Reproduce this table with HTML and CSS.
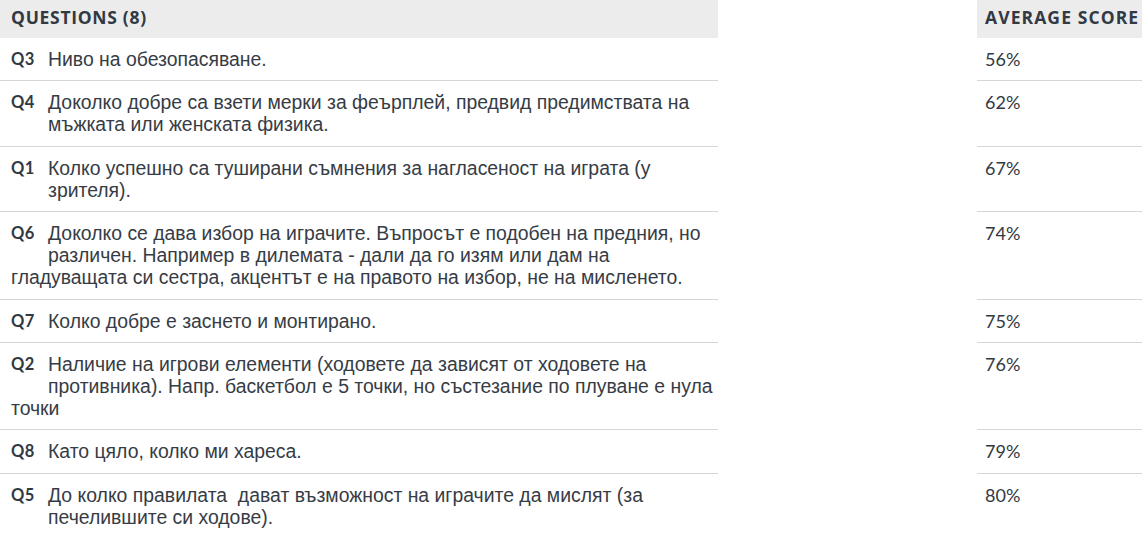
FILE: index.html
```html
<!DOCTYPE html>
<html lang="bg">
<head>
<meta charset="utf-8">
<title>Questions</title>
<link rel="stylesheet" href="styles.css">
</head>
<body>
<div class="board">
  <div class="head">
    <div class="head-q">QUESTIONS (8)</div>
    <div class="head-s">AVERAGE SCORE</div>
  </div>

  <div class="row">
    <div class="score">56%</div>
    <div class="q"><span class="qid">Q3</span>Ниво на обезопасяване.</div>
  </div>
  <div class="row">
    <div class="score">62%</div>
    <div class="q"><span class="qid">Q4</span>Доколко добре са взети мерки за феърплей, предвид предимствата на мъжката или женската физика.</div>
  </div>
  <div class="row">
    <div class="score">67%</div>
    <div class="q"><span class="qid">Q1</span>Колко успешно са туширани съмнения за нагласеност на играта (у зрителя).</div>
  </div>
  <div class="row">
    <div class="score">74%</div>
    <div class="q"><span class="qid">Q6</span>Доколко се дава избор на играчите. Въпросът е подобен на предния, но различен. Например в дилемата - дали да го изям или дам на гладуващата си сестра, акцентът е на правото на избор, не на мисленето.</div>
  </div>
  <div class="row">
    <div class="score">75%</div>
    <div class="q"><span class="qid">Q7</span>Колко добре е заснето и монтирано.</div>
  </div>
  <div class="row">
    <div class="score">76%</div>
    <div class="q"><span class="qid">Q2</span>Наличие на игрови елементи (ходовете да зависят от ходовете на противника). Напр. баскетбол е 5 точки, но състезание по плуване е нула точки</div>
  </div>
  <div class="row">
    <div class="score">79%</div>
    <div class="q"><span class="qid">Q8</span>Като цяло, колко ми хареса.</div>
  </div>
  <div class="row">
    <div class="score">80%</div>
    <div class="q"><span class="qid">Q5</span>До колко правилата&nbsp; дават възможност на играчите да мислят (за печелившите си ходове).</div>
  </div>
</div>
</body>
</html>
```

FILE: styles.css
```css
html, body {
  margin: 0;
  padding: 0;
  background: #ffffff;
}

.board {
  width: 1142px;
  color: #363c45;
}

.head {
  display: flex;
  justify-content: space-between;
}

.head-q,
.head-s {
  background: #ececec;
  height: 38px;
  line-height: 35px;
  font-family: "Open Sans", "Liberation Sans", sans-serif;
  font-weight: 700;
  font-size: 17.5px;
  letter-spacing: 1.1px;
  color: #323943;
  box-sizing: border-box;
}

.head-q {
  width: 718px;
  padding-left: 11px;
  letter-spacing: 0.7px;
}

.head-s {
  width: 165px;
  padding-left: 8px;
  white-space: nowrap;
}

.row {
  display: flow-root;
  padding-bottom: 1px;
  background-image: linear-gradient(#d6d6d6, #d6d6d6), linear-gradient(#d6d6d6, #d6d6d6);
  background-size: 718px 1px, 165px 1px;
  background-position: left bottom, right bottom;
  background-repeat: no-repeat;
}

.row:last-child {
  background-image: none;
}

.score {
  float: right;
  width: 165px;
  box-sizing: border-box;
  padding: 10px 0 0 8px;
  line-height: 22.2px;
  font-family: "Lato", "Liberation Sans", sans-serif;
  font-size: 18px;
  color: #323943;
}

.q {
  margin-right: 424px;
  padding: 10px 0 10px 11px;
  line-height: 22.2px;
  font-family: "Liberation Sans", Arial, sans-serif;
  font-size: 19.4px;
}

.qid {
  float: left;
  width: 37px;
  height: 30px;
  font-family: "Lato", "Liberation Sans", sans-serif;
  font-weight: 700;
  font-size: 16.5px;
  letter-spacing: 0.3px;
  color: #323943;
}
```
